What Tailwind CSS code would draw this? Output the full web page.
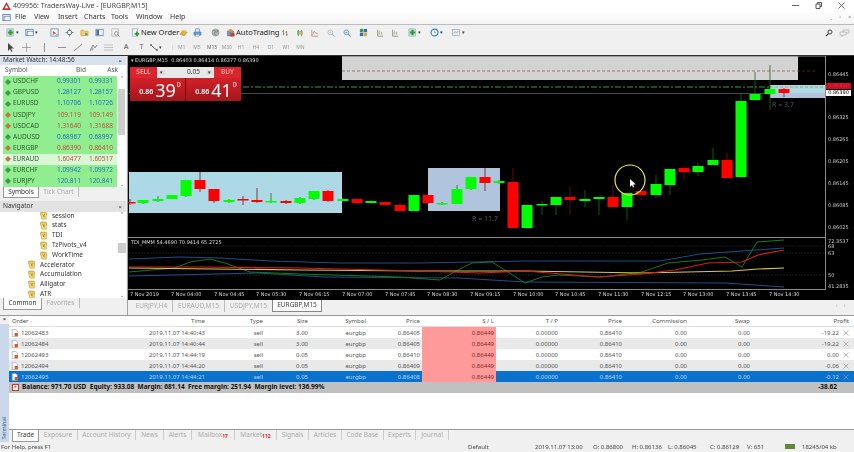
<!DOCTYPE html>
<html lang="en">
<head>
<meta charset="UTF-8">
<title>409956: TradersWay-Live - [EURGBP,M15]</title>
<script src="https://cdn.jsdelivr.net/npm/@tailwindcss/browser@4"></script>
</head>
<body class="bg-[#f0f0f0]">
<svg class="hidden">
  <symbol id="plus" viewBox="0 0 10 10"><rect x="1" y="1" width="7" height="8" fill="#cfe0ee" stroke="#7f9db9" stroke-width=".6"/><path d="M5 2v6M2 5h6" stroke="#34a02c" stroke-width="2.4"/></symbol>
  <symbol id="win" viewBox="0 0 10 10"><rect x="1" y="1.5" width="8" height="7" fill="#d8e6f3" stroke="#5b86b8"/><rect x="3" y="4" width="6" height="4.5" fill="#eef4fa" stroke="#5b86b8" stroke-width=".6"/></symbol>
  <symbol id="chartbox" viewBox="0 0 10 10"><rect x="1" y="1" width="8" height="8" fill="#f4f8fb" stroke="#6b93bd"/><path d="M3 3l4 3-2 .4L4 8z" fill="#d3462a"/><path d="M7 7.5h1.500" stroke="#3a9a3a"/></symbol>
  <symbol id="cross" viewBox="0 0 10 10"><circle cx="5" cy="5" r="2.600" fill="none" stroke="#6a7f95" stroke-width="1.100"/><path d="M5 .5v3M5 6.500v3M.5 5h3M6.500 5h3" stroke="#6a7f95"/></symbol>
  <symbol id="folder" viewBox="0 0 10 10"><path d="M1 2.500h3l1 1h4v5H1z" fill="#f2cf58" stroke="#bb9626" stroke-width=".6"/><path d="M6 5l3 2-3 2z" fill="#4c8fcf"/></symbol>
  <symbol id="panel" viewBox="0 0 10 10"><rect x="1" y="1.500" width="8" height="7" fill="#fff" stroke="#6b93bd"/><rect x="1.500" y="2" width="3" height="6" fill="#3f79b5"/></symbol>
  <symbol id="zoomdoc" viewBox="0 0 10 10"><rect x="1" y="1" width="7" height="8" fill="#f3f3f3" stroke="#a5a5a5" stroke-width=".7"/><circle cx="6" cy="6" r="2" fill="none" stroke="#8a8a8a"/><path d="M7.500 7.500L9.500 9.500" stroke="#8a8a8a"/></symbol>
  <symbol id="order" viewBox="0 0 10 10"><rect x="1.500" y="1" width="6" height="8" fill="#f5f8fb" stroke="#7c97b3" stroke-width=".7"/><path d="M6.500 4v5M4 6.500h5" stroke="#2f9d37" stroke-width="2"/></symbol>
  <symbol id="gold" viewBox="0 0 10 10"><path d="M1 7l3-4 5 1.500-3 4z" fill="#e5b53a" stroke="#a87f18" stroke-width=".6"/><path d="M4 3l1-1.500 3.500 1L9 4.500z" fill="#f4d774"/></symbol>
  <symbol id="printer" viewBox="0 0 10 10"><rect x="3" y="1" width="4" height="4" fill="#dfe9f5" stroke="#4c7fc0" stroke-width=".7"/><rect x="1" y="4.500" width="8" height="3.500" rx=".5" fill="#6d9ddc" stroke="#3e6fae" stroke-width=".6"/><rect x="3" y="7" width="4" height="2" fill="#fff" stroke="#4c7fc0" stroke-width=".5"/></symbol>
  <symbol id="globe" viewBox="0 0 10 10"><circle cx="5" cy="5" r="4" fill="#a9b8b4" stroke="#7b8b88" stroke-width=".5"/><path d="M3 2.500c2 0 2 2 1 3s1 2 2 2.500M7 2l1 2-2 .5" stroke="#5f8a5c" fill="none"/></symbol>
  <symbol id="auto" viewBox="0 0 10 10"><rect x="1.500" y="3" width="7" height="6" rx="1" fill="#7894ad" stroke="#516d85" stroke-width=".5"/><circle cx="5" cy="2.500" r="1.800" fill="#e59a35"/><rect x="5" y="5.500" width="4.500" height="4" rx="1" fill="#d33a2a"/></symbol>
  <symbol id="bars" viewBox="0 0 10 10"><path d="M3 1v7M1.500 3H3M3 6h1.500M7 2.500V9M5.500 4H7M7 7h1.500" stroke="#8a7a45" fill="none"/></symbol>
  <symbol id="candle" viewBox="0 0 10 10"><path d="M3 1v8M7 1v8" stroke="#3b8f3e"/><rect x="2" y="2.500" width="2" height="4" fill="#68c26b" stroke="#3b8f3e" stroke-width=".4"/><rect x="6" y="3.500" width="2" height="3.500" fill="#e5a030" stroke="#a0701a" stroke-width=".4"/></symbol>
  <symbol id="line" viewBox="0 0 10 10"><path d="M1 1v8h8" stroke="#9a8f70" fill="none"/><path d="M2 7l2-4 2 2 3 1" stroke="#b7855a" fill="none"/></symbol>
  <symbol id="zoomin" viewBox="0 0 10 10"><circle cx="4.200" cy="4.200" r="3" fill="#eef3f8" stroke="#a7b3bf"/><path d="M6.500 6.500l3 3" stroke="#a7b3bf" stroke-width="1.300"/><path d="M2.800 4.200h2.800M4.200 2.800v2.800" stroke="#b6bfc8" stroke-width=".7"/></symbol>
  <symbol id="zoomout" viewBox="0 0 10 10"><circle cx="4.200" cy="4.200" r="3" fill="#dceaf6" stroke="#5f8fc0"/><path d="M6.500 6.500l3 3" stroke="#5f8fc0" stroke-width="1.300"/><path d="M2.800 4.200h2.800" stroke="#3f77b3" stroke-width=".8"/></symbol>
  <symbol id="tile" viewBox="0 0 10 10"><rect x="1" y="1" width="3.700" height="3.700" fill="#3a9c41"/><rect x="5.300" y="1" width="3.700" height="3.700" fill="#2f6fbd"/><rect x="1" y="5.300" width="3.700" height="3.700" fill="#2f6fbd"/><rect x="5.300" y="5.300" width="3.700" height="3.700" fill="#e0a72a"/></symbol>
  <symbol id="shift" viewBox="0 0 10 10"><path d="M2 1v8h7" stroke="#7f8f7a" fill="none"/><path d="M4 2v5M7 3.500V7" stroke="#9c8d55"/></symbol>
  <symbol id="clock" viewBox="0 0 10 10"><circle cx="5" cy="5" r="3.800" fill="#fff" stroke="#2e7fc9" stroke-width="1.300"/><path d="M5 3v2h1.500" stroke="#2e5f96" stroke-width=".7" fill="none"/></symbol>
  <symbol id="tmpl" viewBox="0 0 10 10"><rect x="1" y="1.500" width="8" height="7" fill="#e8eef4" stroke="#8aa0b5" stroke-width=".7"/><path d="M2 6l2-2 1.500 1.500L8 3" stroke="#5ea15e" stroke-width=".7" fill="none"/></symbol>
  <symbol id="ea" viewBox="0 0 10 10"><path d="M1 1h5l1 1v3H1z" fill="#f2d25e" stroke="#b99522" stroke-width=".5"/><path d="M0.500 2h6.500v7H2z" fill="#f5dd7c" stroke="#b4921f" stroke-width=".6"/><path d="M3 3.500l2 3.500M5 3.500l-1 3" stroke="#8d6f14" stroke-width=".7"/></symbol>
  <symbol id="tradeico" viewBox="0 0 10 10"><path d="M1.500 .5h4.500l2 2v7h-6.500z" fill="#fff" stroke="#8f8f8f" stroke-width=".7"/><rect x="4.500" y="5" width="4" height="4" fill="#d8572f"/></symbol>
</svg>

<div class="w-[854px] h-[452px] overflow-hidden flex flex-col font-['Noto_Sans',sans-serif] text-[#333] blur-[0.4px]">

  <!-- title bar -->
  <div class="h-[11px] bg-white flex items-center relative shrink-0">
    <svg class="w-[9px] h-[8px] ml-[2px]" viewBox="0 0 10 9"><path d="M5 0l5 9H0z" fill="#c8323a"/><path d="M5 3.500l2 3.500H3z" fill="#fff"/></svg>
    <span class="ml-[2px] text-[7px] leading-none text-[#444]">409956: TradersWay-Live - [EURGBP,M15]</span>
    <div class="ml-auto flex items-center gap-[16px] pr-[9px] text-[#555]">
      <span class="w-[7px] h-px bg-[#666] block"></span>
      <svg class="w-[7px] h-[7px]" viewBox="0 0 7 7"><path d="M1 2h4v4.500H1zM2.500 2V.5h4v4H5" fill="none" stroke="#555"/></svg>
      <svg class="w-[7px] h-[7px]" viewBox="0 0 7 7"><path d="M.5.5l6 6M6.500.5l-6 6" stroke="#666"/></svg>
    </div>
  </div>

  <!-- menu -->
  <div class="h-[14px] bg-gradient-to-b from-white to-[#f4f4f4] flex items-center relative shrink-0 border-b border-[#bbb] text-[7px]">
    <svg class="w-[9px] h-[9px] ml-[2px]"><use href="#win"/></svg>
    <span class="ml-[4px] w-[19px]">File</span>
    <span class="w-[24px]">View</span>
    <span class="w-[26px]">Insert</span>
    <span class="w-[27px]">Charts</span>
    <span class="w-[25px]">Tools</span>
    <span class="w-[34px]">Window</span>
    <span>Help</span>
    <div class="ml-auto flex gap-[7px] pr-[3px] text-[5px] text-[#777] leading-none"><span>_</span><span>▫</span><span>×</span></div>
  </div>

  <!-- toolbar 1 -->
  <div class="h-[15px] bg-[#f0f0f0] flex items-center shrink-0 text-[7px] pl-[6px] whitespace-nowrap">
    <svg class="w-[9px] h-[9px]"><use href="#plus"/></svg><span class="text-[5px] w-[10px] pl-[1px]">▾</span>
    <svg class="w-[9px] h-[9px]"><use href="#win"/></svg><span class="text-[5px] w-[16px] pl-[1px]">▾</span>
    <svg class="w-[9px] h-[9px] mr-[6px]"><use href="#chartbox"/></svg>
    <svg class="w-[9px] h-[9px] mr-[6px]"><use href="#cross"/></svg>
    <svg class="w-[9px] h-[9px] mr-[6px]"><use href="#folder"/></svg>
    <svg class="w-[9px] h-[9px] mr-[7px]"><use href="#panel"/></svg>
    <svg class="w-[9px] h-[9px] mr-[11px]"><use href="#zoomdoc"/></svg>
    <svg class="w-[9px] h-[9px]"><use href="#order"/></svg>
    <span class="w-[39px] text-[7.5px] text-[#222] pl-[1px]">New Order</span>
    <svg class="w-[9px] h-[9px] mr-[5px]"><use href="#gold"/></svg>
    <svg class="w-[9px] h-[9px] mr-[9px]"><use href="#printer"/></svg>
    <svg class="w-[9px] h-[9px] mr-[6px]"><use href="#globe"/></svg>
    <svg class="w-[9px] h-[9px]"><use href="#auto"/></svg>
    <span class="w-[46px] text-[7.5px] text-[#222] pl-[1px]">AutoTrading</span>
    <svg class="w-[8px] h-[8px] mr-[7px]"><use href="#bars"/></svg>
    <svg class="w-[8px] h-[8px] mr-[7px]"><use href="#candle"/></svg>
    <svg class="w-[8px] h-[8px] mr-[8px]"><use href="#line"/></svg>
    <svg class="w-[8px] h-[8px] mr-[8px]"><use href="#zoomin"/></svg>
    <svg class="w-[8px] h-[8px] mr-[8px]"><use href="#zoomout"/></svg>
    <svg class="w-[9px] h-[9px] mr-[8px]"><use href="#tile"/></svg>
    <svg class="w-[8px] h-[8px] mr-[7px]"><use href="#shift"/></svg>
    <svg class="w-[8px] h-[8px] mr-[9px]"><use href="#shift"/></svg>
    <svg class="w-[9px] h-[9px]"><use href="#plus"/></svg><span class="text-[5px] w-[13px] pl-[1px]">▾</span>
    <svg class="w-[9px] h-[9px]"><use href="#clock"/></svg><span class="text-[5px] w-[12px] pl-[1px]">▾</span>
    <svg class="w-[10px] h-[9px]"><use href="#tmpl"/></svg><span class="text-[5px] pl-[1px]">▾</span>
    <div class="ml-auto flex items-center gap-[6px] pr-[4px]">
      <svg class="w-[8px] h-[8px]" viewBox="0 0 8 8"><circle cx="5" cy="3" r="2" fill="none" stroke="#444"/><path d="M3.500 4.500L1 7" stroke="#444" stroke-width="1.300"/></svg>
      <svg class="w-[11px] h-[8px]" viewBox="0 0 11 8"><path d="M1 3h6v3H4L3 7.500V6H1zM4 3V1h6v3H7" fill="none" stroke="#aaa" stroke-width=".7"/></svg>
    </div>
  </div>

  <!-- toolbar 2 -->
  <div class="h-[15px] bg-[#f0f0f0] flex items-center shrink-0 pl-[7px]">
    <svg class="w-[7px] h-[9px] mr-[8px]" viewBox="0 0 7 9"><path d="M1 0v8l2-2 1.500 3 1-.5L4 5.500h3z" fill="#444"/></svg>
    <svg class="w-[9px] h-[9px] mr-[12px]" viewBox="0 0 9 9"><path d="M4.500 0v9M0 4.500h9" stroke="#888" stroke-width=".7"/></svg>
    <svg class="w-[3px] h-[9px] mr-[12px]" viewBox="0 0 3 9"><path d="M1.500 0v9" stroke="#777" stroke-width=".8"/></svg>
    <svg class="w-[8px] h-[9px] mr-[8px]" viewBox="0 0 8 9"><path d="M0 4.500h8" stroke="#777" stroke-width=".8"/></svg>
    <svg class="w-[8px] h-[9px] mr-[7px]" viewBox="0 0 8 9"><path d="M0 8l8-7" stroke="#777" stroke-width=".8"/></svg>
    <svg class="w-[9px] h-[9px] mr-[6px]" viewBox="0 0 9 9"><path d="M1 8l3-6 2 3 2-3" stroke="#888" fill="none"/><circle cx="3" cy="6" r="1.500" fill="#aaa"/></svg>
    <svg class="w-[9px] h-[9px] mr-[6px]" viewBox="0 0 9 9"><path d="M0 2h9M0 4.500h9M0 7h9" stroke="#aaa" stroke-width=".7"/></svg>
    <span class="w-[14px] text-[7px] text-[#777] font-semibold text-center">A</span>
    <span class="w-[17px] text-[7px] text-[#888] font-semibold text-center">T</span>
    <svg class="w-[8px] h-[9px]" viewBox="0 0 8 9"><path d="M1 2l3 3 3 2" stroke="#667" fill="none"/><circle cx="1" cy="2" r="1" fill="#667"/><circle cx="7" cy="7" r="1" fill="#667"/></svg>
    <span class="text-[5px] w-[14px] pl-[1px]">▾</span>
    <div class="flex text-[5px] text-[#999] leading-none w-[135px] border-l border-[#ddd] pl-[1px]">
      <span class="w-[15.500px] text-center">M1</span><span class="w-[15.500px] text-center">M5</span><span class="w-[15.500px] text-center text-[#666]">M15</span><span class="w-[14.500px] text-center">M30</span><span class="w-[14.500px] text-center">H1</span><span class="w-[15.500px] text-center">H4</span><span class="w-[15.500px] text-center">D1</span><span class="w-[15.500px] text-center">W1</span><span class="w-[13.500px] text-center">MN</span>
    </div>
  </div>

  <!-- main -->
  <div class="h-[260px] flex shrink-0 border-t border-[#333]">
    <!-- left panels -->
    <div class="w-[128px] shrink-0 flex flex-col bg-[#f0f0f0] border-r border-[#a0a0a0] pr-[1px]">
      <div class="h-[9px] bg-[#d9e2ec] flex items-center justify-between px-[3px] text-[6.500px] leading-none shrink-0">
        <span>Market Watch: 14:48:56</span><span class="text-[6px] font-bold text-[#555] pr-[1px]">×</span>
      </div>
      <div class="h-[11px] grid grid-cols-[50px_31px_32px] items-center bg-white text-[6.500px] text-[#555] shrink-0 pl-[5px] pr-[10px] leading-none">
        <span>Symbol</span><span class="text-right">Bid</span><span class="text-right">Ask</span>
      </div>
      <div class="h-[111px] flex bg-white shrink-0">
        <div id="watch" class="w-[115px] ml-[3px] flex flex-col"></div>
        <div class="w-[9px] flex flex-col items-center justify-between text-[5px] leading-none text-[#555] ml-auto">
          <span>⌃</span><div class="w-[7px] h-[46px] bg-[#cdcdcd] mb-[40px]"></div><span>⌄</span>
        </div>
      </div>
      <div class="h-[11px] flex items-start pl-[3px] text-[6.500px] shrink-0 leading-none">
        <span class="w-[36px] h-[11px] bg-white border border-t-0 border-[#999] flex items-center justify-center">Symbols</span>
        <span class="w-[40px] h-[10px] flex items-center justify-center text-[#aaa] border-r border-[#bbb]">Tick Chart</span>
      </div>
      <div class="h-[11px] mt-[3px] bg-[#e2e2e2] flex items-center justify-between px-[3px] text-[6.500px] leading-none shrink-0">
        <span>Navigator</span><span class="text-[6px] font-bold text-[#555] pr-[1px]">×</span>
      </div>
      <div class="h-[86px] bg-white flex overflow-hidden shrink-0">
        <div id="nav" class="w-[116px] flex flex-col -mt-[1px]"></div>
        <div class="w-[9px] flex flex-col items-center text-[5px] leading-none text-[#555] ml-auto justify-between">
          <span>⌃</span><div class="w-[8px] h-[10px] bg-[#cdcdcd] mt-[14px] mb-[28px]"></div><span>⌄</span>
        </div>
      </div>
      <div class="h-[12px] flex items-start pl-[3px] text-[6.500px] shrink-0 leading-none">
        <span class="w-[39px] h-[12px] bg-white border border-t-0 border-[#999] flex items-center justify-center">Common</span>
        <span class="w-[38px] h-[10px] flex items-center justify-center text-[#aaa] border-r border-[#bbb]">Favorites</span>
      </div>
    </div>

    <!-- chart column -->
    <div class="flex-1 flex flex-col min-w-0">
      <div id="chart" class="relative h-[244px] bg-black overflow-hidden shrink-0 font-['DejaVu_Sans',sans-serif] text-[5px] leading-none text-[#ddd]">
        <svg id="plot" class="absolute inset-0 w-[726px] h-[244px]" viewBox="128 56 726 244"></svg>

        <span class="absolute left-[3px] top-[2px] whitespace-nowrap">▾ EURGBP,M15&nbsp; 0.86403 0.86414 0.86377 0.86390</span>

        <!-- one click trading -->
        <div class="absolute left-[2px] top-[11px] w-[111px] h-[34px] flex flex-col font-['Noto_Sans',sans-serif]">
          <div class="h-[11px] flex">
            <span class="w-[27px] bg-[#d8262c] text-[#f0b0b0] text-[6.500px] font-semibold flex items-center justify-center">SELL</span>
            <div class="w-[57px] bg-[#e8e8e8] flex items-center justify-between text-[#333] text-[6.500px] px-[1px]">
              <span class="text-[5px] bg-[#ddd] px-[2px]">▾</span><span class="ml-auto pr-[6px]">0.05</span><span class="text-[5px] bg-[#ddd] px-[2px]">▾</span>
            </div>
            <span class="flex-1 bg-[#d8262c] text-[#e9a0a0] text-[6.500px] font-semibold flex items-center justify-center">BUY</span>
          </div>
          <div class="h-[23px] flex bg-gradient-to-b from-[#d32028] to-[#a5161c] text-white">
            <div class="w-[56px] flex items-center justify-center border-r border-[#700] pl-[5px]">
              <span class="text-[7px] font-semibold mt-[4px] mr-[2px]">0.86</span><span class="text-[18px] leading-none">39</span><span class="text-[7px] self-start mt-[3px] ml-[1px]">0</span>
            </div>
            <div class="flex-1 flex items-center justify-center pl-[5px]">
              <span class="text-[7px] font-semibold mt-[4px] mr-[2px]">0.86</span><span class="text-[18px] leading-none">41</span><span class="text-[7px] self-start mt-[3px] ml-[1px]">0</span>
            </div>
          </div>
        </div>

        <span class="absolute left-[344px] top-[159px] text-[7px] text-[#555] font-['Noto_Sans',sans-serif]">R = 11.7</span>
        <span class="absolute left-[644px] top-[45px] text-[7px] text-[#555] font-['Noto_Sans',sans-serif]">R = 3.7</span>

        <!-- price scale -->
        <span class="absolute left-[700px] top-[16px] text-[#ccc]">0.86445</span>
        <span class="absolute left-[698px] top-[27px] w-[25px] h-[6px] bg-[#c8101a] text-[#e26] text-center">0.86410</span>
        <span class="absolute left-[698px] top-[34px] w-[25px] h-[6px] bg-white text-black text-center">0.86390</span>
        <span class="absolute left-[700px] top-[59px] text-[#ccc]">0.86325</span>
        <span class="absolute left-[700px] top-[81px] text-[#ccc]">0.86265</span>
        <span class="absolute left-[700px] top-[103px] text-[#ccc]">0.86205</span>
        <span class="absolute left-[700px] top-[125px] text-[#ccc]">0.86145</span>
        <span class="absolute left-[700px] top-[147px] text-[#ccc]">0.86085</span>
        <span class="absolute left-[700px] top-[169px] text-[#ccc]">0.86025</span>

        <span class="absolute left-[3px] top-[184px] whitespace-nowrap">TDI_MMM 54.4690 70.9414 65.2725</span>
        <span class="absolute left-[700px] top-[183px] text-[#ccc]">72.3537</span>
        <span class="absolute left-[700px] top-[188px] text-[#ccc]">68</span>
        <span class="absolute left-[700px] top-[195px] text-[#ccc]">63</span>
        <span class="absolute left-[700px] top-[217px] text-[#ccc]">50</span>
        <span class="absolute left-[700px] top-[228px] text-[#ccc]">41.2835</span>
        <div id="times"></div>
      </div>

      <!-- chart tabs -->
      <div class="h-[14px] flex items-start text-[6.500px] leading-none text-[#aaa] pl-[3px] shrink-0 relative">
        <span class="w-[42px] h-[12px] flex items-center justify-center border-r border-[#bbb]">EURJPY,H4</span>
        <span class="w-[52px] h-[12px] flex items-center justify-center border-r border-[#bbb]">EURAUD,M15</span>
        <span class="w-[47px] h-[12px] flex items-center justify-center">USDJPY,M15</span>
        <span class="w-[50px] h-[12px] bg-white border border-t-0 border-[#888] text-[#444] flex items-center justify-center">EURGBP,M15</span>
        <span class="ml-auto pr-[3px] pt-[3px] text-[#999] text-[5px] tracking-[6px]">‹›</span>
      </div>
    </div>
  </div>

  <!-- terminal -->
  <div class="h-[127px] flex shrink-0 bg-white border-t border-[#999] relative">
    <div class="w-[9px] shrink-0 bg-[#c9d8ea] flex flex-col items-center justify-between">
      <span class="text-[6px] font-bold leading-none text-[#333] bg-[#f0f0f0] w-full text-center h-[8px]">×</span>
      <span class="[writing-mode:vertical-rl] rotate-180 text-[5.500px] leading-none mb-[2px] text-[#33507a]">Terminal</span>
    </div>
    <div class="flex-1 flex flex-col min-w-0 text-[6px] leading-none">
      <div class="h-[11px] grid grid-cols-[83px_115px_58px_45px_58px_54px_74px_64px_64px_65px_63px_1fr] items-center text-[#555] shrink-0 border-b border-[#ddd]">
        <span class="pl-[3px]">Order <span class="text-[#bbb]">-</span></span>
        <span class="text-right pr-[2px]">Time</span><span class="text-right pr-[2px]">Type</span><span class="text-right pr-[2px]">Size</span><span class="text-right pr-[2px]">Symbol</span><span class="text-right pr-[2px]">Price</span><span class="text-right pr-[2px]">S / L</span><span class="text-right pr-[2px]">T / P</span><span class="text-right pr-[2px]">Price</span><span class="text-right pr-[2px]">Commission</span><span class="text-right pr-[2px]">Swap</span><span class="text-right pr-[5px]">Profit</span>
      </div>
      <div id="orders" class="flex flex-col shrink-0"></div>
      <div class="h-[11px] bg-[#c0c0c0] flex items-center font-bold text-[#111] text-[6.500px] shrink-0 relative">
        <span class="w-[7px] h-[7px] ml-[3px] bg-[#f5f5f5] border border-[#c33] text-[#c33] text-[5px] flex items-center justify-center">+</span>
        <span class="ml-[3px] whitespace-pre">Balance: 971.70 USD  Equity: 933.08  Margin: 681.14  Free margin: 251.94  Margin level: 136.99%</span>
        <span class="absolute right-[17px]">-38.62</span>
      </div>
      <div class="flex-1 border-b border-[#999]"></div>
      <div class="h-[12px] flex items-start text-[6.500px] text-[#aaa] bg-[#f0f0f0] pl-[3px] shrink-0">
        <span class="w-[27px] h-[12px] bg-white border border-t-0 border-[#999] text-[#444] flex items-center justify-center">Trade</span>
        <span class="w-[39px] h-[10px] flex items-center justify-center border-r border-[#ccc]">Exposure</span>
        <span class="w-[58px] h-[10px] flex items-center justify-center border-r border-[#ccc]">Account History</span>
        <span class="w-[28px] h-[10px] flex items-center justify-center border-r border-[#ccc]">News</span>
        <span class="w-[28px] h-[10px] flex items-center justify-center border-r border-[#ccc]">Alerts</span>
        <span class="w-[43px] h-[10px] flex items-center justify-center border-r border-[#ccc]">Mailbox<sub class="text-[#d22] text-[5px] font-bold">17</sub></span>
        <span class="w-[42px] h-[10px] flex items-center justify-center border-r border-[#ccc]">Market<sub class="text-[#d22] text-[5px] font-bold">112</sub></span>
        <span class="w-[32px] h-[10px] flex items-center justify-center border-r border-[#ccc]">Signals</span>
        <span class="w-[33px] h-[10px] flex items-center justify-center border-r border-[#ccc]">Articles</span>
        <span class="w-[42px] h-[10px] flex items-center justify-center border-r border-[#ccc]">Code Base</span>
        <span class="w-[32px] h-[10px] flex items-center justify-center border-r border-[#ccc]">Experts</span>
        <span class="w-[33px] h-[10px] flex items-center justify-center border-r border-[#ccc]">Journal</span>
      </div>
    </div>
  </div>

  <!-- status bar -->
  <div class="flex-1 bg-[#f0f0f0] flex items-start text-[6px] leading-none text-[#444] pt-[2px] whitespace-nowrap">
    <span class="w-[468px] pl-[1px]">For Help, press F1</span>
    <span class="w-[67px]">Default</span>
    <span class="w-[58px]">2019.11.07 13:00</span>
    <span class="w-[39px]">O: 0.86800</span>
    <span class="w-[36px]">H: 0.86136</span>
    <span class="w-[42px]">L: 0.86045</span>
    <span class="w-[37px]">C: 0.86129</span>
    <span class="w-[38px]">V: 651</span>
    <span class="w-[10px] h-[5px] bg-[#5c8a3a] mr-[7px]"></span>
    <span>18245/04 kb</span>
  </div>
</div>

<script>
// market watch
const watch = [
  ['USDCHF', '0.99301', '0.99331', 1],
  ['GBPUSD', '1.28127', '1.28157', 1],
  ['EURUSD', '1.10706', '1.10726', 1],
  ['USDJPY', '109.119', '109.149', 0],
  ['USDCAD', '1.31640', '1.31688', 0],
  ['AUDUSD', '0.68967', '0.68997', 1],
  ['EURGBP', '0.86390', '0.86410', 0],
  ['EURAUD', '1.60477', '1.60517', 0],
  ['EURCHF', '1.09942', '1.09972', 1],
  ['EURJPY', '120.811', '120.841', 1]
];
document.getElementById('watch').innerHTML = watch.map(([sym, bid, ask, up]) => `
  <div class="h-[11.100px] grid grid-cols-[47px_31px_32px] items-center text-[6.500px] leading-none ${sym === 'EURAUD' ? 'bg-[#d8f8d8]' : 'bg-[#90ee90]'}">
    <span class="flex items-center text-[#2c5a2c]">
      <svg class="w-[6px] h-[6px] mx-[2px]" viewBox="0 0 6 6"><path d="M3 0l3 3-3 3-3-3z" fill="${up ? '#3f9a45' : '#c9743f'}"/></svg>${sym}
    </span>
    <span class="text-right ${up ? 'text-[#1e6fc0]' : 'text-[#c0503a]'}">${bid}</span>
    <span class="text-right ${up ? 'text-[#1e6fc0]' : 'text-[#c0503a]'}">${ask}</span>
  </div>`).join('');

// navigator
const nav = [['session', 1], ['stats', 1], ['TDI', 1], ['TzPivots_v4', 1], ['WorkTime', 1], ['Accelerator', 0], ['Accumulation', 0], ['Alligator', 0], ['ATR', 0]];
document.getElementById('nav').innerHTML = nav.map(([name, deep]) => `
  <div class="h-[9.800px] shrink-0 flex items-center text-[6.500px] leading-none ${deep ? 'pl-[40px]' : 'pl-[28px]'}">
    <svg class="w-[9px] h-[9px] mr-[3px]"><use href="#ea"/></svg>${name}
  </div>`).join('');

// terminal rows
const orders = [
  ['12062483', '2019.11.07 14:40:43', '3.00', '0.86405', '-19.22'],
  ['12062484', '2019.11.07 14:40:44', '3.00', '0.86405', '-19.22'],
  ['12062493', '2019.11.07 14:44:19', '0.05', '0.86410', '0.00'],
  ['12062494', '2019.11.07 14:44:20', '0.05', '0.86409', '-0.06'],
  ['12062495', '2019.11.07 14:44:21', '0.05', '0.86408', '-0.12']
];
document.getElementById('orders').innerHTML = orders.map((o, i) => {
  const sel = i === 4;
  const rowBg = sel ? 'bg-[#0a72cc] text-[#b8d8f4]' : i % 2 ? 'bg-[#e9e9e9] text-[#555]' : 'bg-white text-[#555]';
  return `<div class="h-[11px] grid grid-cols-[83px_115px_58px_45px_58px_54px_74px_64px_64px_65px_63px_1fr] items-center ${rowBg}">
    <span class="flex items-center pl-[2px]"><svg class="w-[8px] h-[8px] mr-[2px]"><use href="#tradeico"/></svg>${o[0]}</span>
    <span class="text-right pr-[2px]">${o[1]}</span><span class="text-right pr-[2px]">sell</span><span class="text-right pr-[2px]">${o[2]}</span><span class="text-right pr-[2px]">eurgbp</span><span class="text-right pr-[2px]">${o[3]}</span>
    <span class="h-[11px] flex items-center justify-end pr-[2px] bg-[#ff9a9a] text-[#8a2a2a]">0.86449</span>
    <span class="text-right pr-[2px]">0.00000</span><span class="text-right pr-[2px]">0.86410</span><span class="text-right pr-[2px]">0.00</span><span class="text-right pr-[2px]">0.00</span>
    <span class="flex items-center justify-end pr-[5px]">${o[4]}<svg class="w-[6px] h-[6px] ml-[4px]" viewBox="0 0 6 6"><path d="M.5.5l5 5M5.500.5l-5 5" stroke="#999" stroke-width=".7"/></svg></span>
  </div>`;
}).join('');

// chart: x, top, bottom, wick top, wick bottom, up
const candles = [
  [130,202,203,199,205,0],[143,200,203,200,204,1],[158,199,201,196,202,1],[172,195,199,195,199,1],[186,180,196,180,197,1],
  [200,180,189,172,192,0],[214,189,201,189,203,0],[229,200,202,199,203,1],[243,199,200,196,205,0],[257,200,202,188,203,0],
  [271,201,202,193,203,1],[286,201,203,200,204,0],[300,198,203,197,204,1],[314,191,199,191,200,1],[328,191,201,190,202,0],
  [343,199,201,198,202,1],[357,199,203,198,204,0],[371,201,203,200,204,1],[385,202,205,201,206,0],[400,205,211,202,211,0],
  [414,195,211,195,211,1],[428,195,203,195,204,0],[442,203,204,202,205,1],[457,189,204,185,204,1],[471,177,189,177,190,1],
  [485,177,183,168,191,0],[499,181,183,180,184,1],[513,182,228,168,228,0],[527,205,228,204,229,1],[542,204,205,201,215,1],
  [556,197,205,197,215,1],[570,197,200,187,215,0],[585,199,201,190,207,1],[599,197,199,197,215,1],[613,197,207,185,207,0],
  [627,193,207,193,220,1],[641,191,195,191,200,0],[656,184,195,175,198,1],[670,169,185,169,195,1],[684,168,172,168,180,0],
  [698,166,172,163,176,1],[713,160,165,148,165,1],[727,160,178,153,178,0],[741,101,177,93,177,1],[755,94,100,72,100,1],
  [770,89,94,65,110,1],[784,89,93,88,97,0]
];
const poly = (pts, c, w = 1) => `<polyline points="${pts}" fill="none" stroke="${c}" stroke-width="${w}"/>`;
let svg = `
  <rect x="129" y="172" width="213" height="41" fill="#add8e6"/>
  <rect x="428" y="168" width="72" height="43" fill="#b0c4de"/>
  <rect x="342" y="56" width="456" height="24" fill="#d3d3d3"/>
  <path d="M342 71H815" stroke="#8b2f2f" stroke-width=".6" stroke-dasharray="3 2"/>
  <path d="M342 56.500H825" stroke="#777" stroke-width=".6"/>
  <path d="M129 93.500H770" stroke="#7a7a7a" stroke-width=".6"/>
  <rect x="770" y="85" width="55" height="8" fill="#add8e6"/>
  <rect x="770" y="93" width="55" height="5" fill="#b0c4de"/>
  <path d="M243 87H770" stroke="#2fa32f" stroke-width="1.200" stroke-dasharray="6 2 2 2"/>
  <path d="M770 87H825" stroke="#9a9a3a" stroke-width=".8" stroke-dasharray="3 2"/>
  <path d="M128 237.500H825M128 289.500H825M825.500 56V290" stroke="#8a8a8a" stroke-width="1"/>
  <path d="M129 246H825M129 253H825M129 275H825" stroke="#3a3a3a" stroke-width=".5" stroke-dasharray="2 1"/>`;
candles.forEach(([x, t, b, wt, wb, up]) => {
  const c = up ? '#00ff00' : '#ff0000';
  const w = up ? '#0e7a0e' : '#7a1010';
  svg += `<path d="M${x} ${wt}V${wb}" stroke="${w}" stroke-width=".8"/><rect x="${x - 5.5}" y="${t}" width="11" height="${Math.max(b - t, 1.5)}" fill="${c}"/>`;
});
svg += poly('129,259 180,257 220,258 270,261 340,263 420,263 525,261 660,261 700,254 784,248', '#1f4e8a');
svg += poly('129,276 258,273 325,277 458,278 525,282 725,283 784,287', '#1f4e8a');
svg += poly('129,272 175,268 190,262 210,259 225,263 250,272 300,274 400,277 440,280 458,270 472,263 492,262 508,272 525,283 542,277 558,275 602,277 642,272 668,263 702,260 725,257 742,267 757,242 784,240', '#177a17');
svg += poly('129,268 300,270 420,271 525,271 642,273 732,271 758,269 784,268', '#d8c93a', 1.2);
svg += poly('129,267 200,267 300,268 420,271 480,273 525,271 598,277 642,274 675,270 708,263 742,262 758,255 784,250', '#d81e1e', 1.2);
svg += `
  <circle cx="630" cy="180" r="15" fill="none" stroke="#e8e84a" stroke-width="1.200"/>
  <path d="M630 179v8l2-2 1 2.500 1.200-.6-1-2.400h2.600z" fill="#fff"/>`;
document.getElementById('plot').innerHTML = svg;

// time axis
const times = [['7 Nov 2019', 130], ['7 Nov 04:00', 171], ['7 Nov 04:45', 214], ['7 Nov 05:30', 256], ['7 Nov 06:15', 299], ['7 Nov 07:00', 342], ['7 Nov 07:45', 385], ['7 Nov 08:30', 427], ['7 Nov 09:15', 470], ['7 Nov 10:00', 513], ['7 Nov 10:45', 555], ['7 Nov 11:30', 598], ['7 Nov 12:15', 641], ['7 Nov 13:00', 683], ['7 Nov 13:45', 726], ['7 Nov 14:30', 769]];
document.getElementById('times').innerHTML = times.map(([t, x]) =>
  `<span class="absolute top-[236px] whitespace-nowrap" style="left:${x - 128}px">${t}</span>`).join('');
</script>
</body>
</html>
